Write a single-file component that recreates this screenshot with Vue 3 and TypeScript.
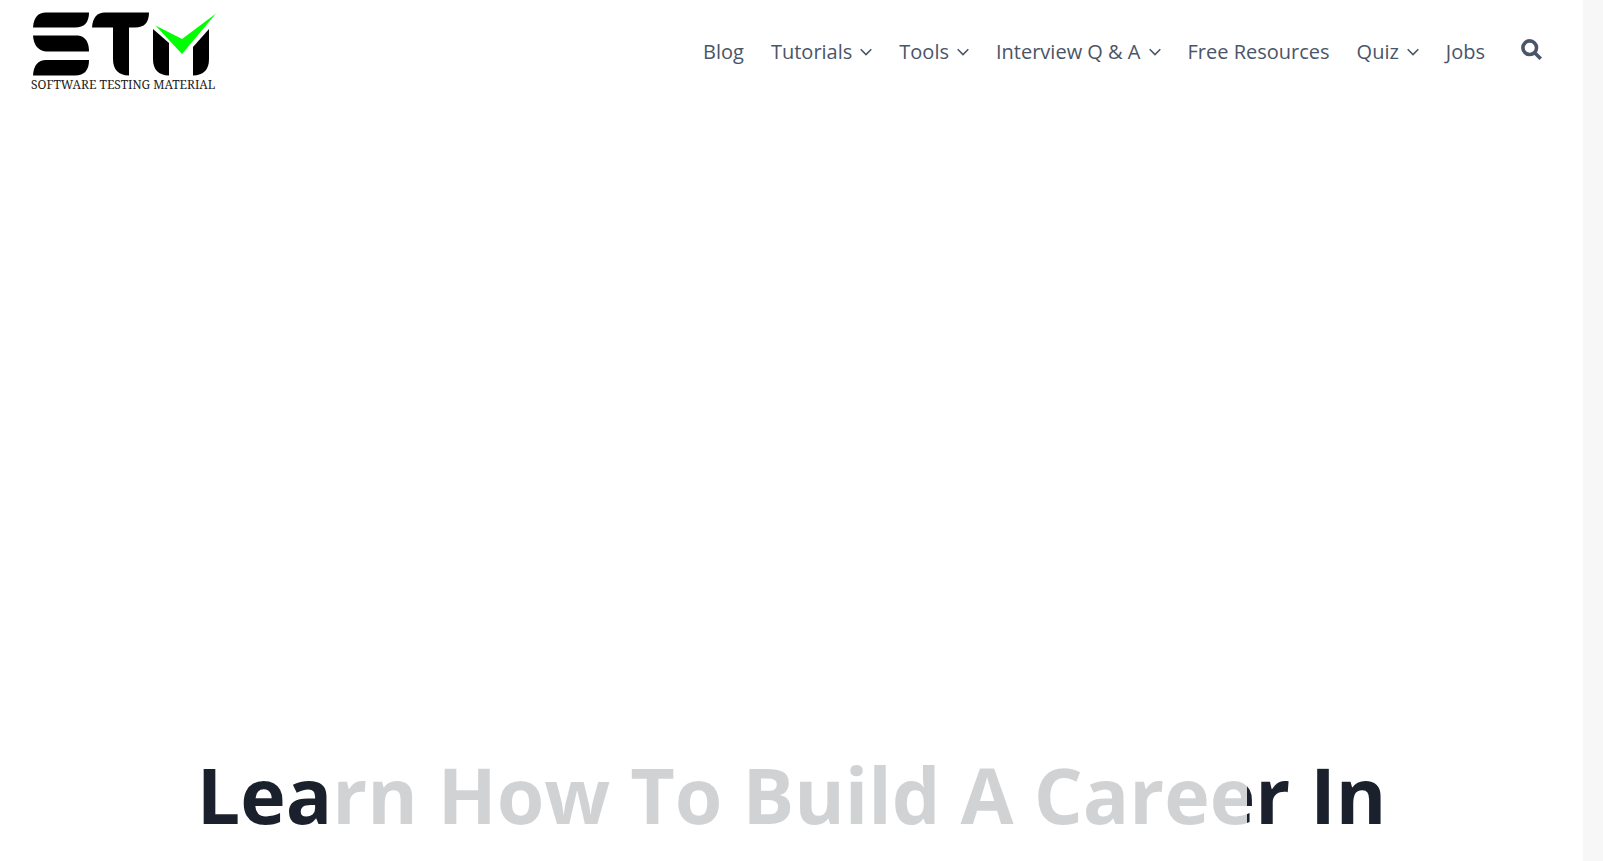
<script setup lang="ts">
interface NavItem {
  label: string
  menu: boolean
}

const items: NavItem[] = [
  { label: 'Blog', menu: false },
  { label: 'Tutorials', menu: true },
  { label: 'Tools', menu: true },
  { label: 'Interview Q & A', menu: true },
  { label: 'Free Resources', menu: false },
  { label: 'Quiz', menu: true },
  { label: 'Jobs', menu: false },
]
</script>

<template>
  <div class="page">
    <div class="content">
      <header class="header">
        <a class="logo" href="#" aria-label="Software Testing Material home">
          <svg class="mark" viewBox="0 0 186 64" aria-hidden="true">
            <path d="M2 15.500Q3 0.500 15 0.500H58Q58 15.500 44 15.500Z" />
            <path d="M2 23.500H47Q58 25 58 39.500H15Q3 38 2 23.500Z" />
            <path d="M2 63.500Q3 48 15 48H58Q58 63.500 44 63.500Z" />
            <path d="M61 15.500Q62 0.500 74 0.500H118Q118 15.500 104 15.500H98V63.500Q82 63 82 47V15.500Z" />
            <path d="M122 17L138 31V63.500Q122 63 122 47Z" />
            <path d="M178 17V47Q178 63 162 63.500V35Z" />
            <path class="tick" d="M124.500 13.500L151 27L185 1.500L151 42Z" />
          </svg>
          <span class="tagline">SOFTWARE TESTING MATERIAL</span>
        </a>
        <nav class="nav" aria-label="Primary">
          <a v-for="item in items" :key="item.label" class="link" href="#">
            {{ item.label }}
            <svg v-if="item.menu" class="chevron" viewBox="0 0 12 8" aria-hidden="true">
              <path d="M0.700 1.200L6 6.500L11.300 1.200" />
            </svg>
          </a>
          <button class="search" type="button" aria-label="Search">
            <svg viewBox="0 0 20 20" aria-hidden="true">
              <circle cx="8.300" cy="8.300" r="6.500" />
              <path d="M13 13L18.800 18.800" />
            </svg>
          </button>
        </nav>
      </header>
      <main class="hero">
        <h1 class="title">Learn How To Build A Career In</h1>
        <div class="veil"></div>
      </main>
    </div>
    <div class="gutter"></div>
  </div>
</template>

<style>
body {
  margin: 0;
}
</style>

<style scoped>
.page {
  display: flex;
  min-height: 100vh;
  background: #fff;
  font-family: "Open Sans", "Noto Sans", sans-serif;
}

.content {
  flex: 1;
  display: flex;
  flex-direction: column;
}

.gutter {
  width: 20px;
  background: #f7f7f7;
}

.header {
  display: flex;
  justify-content: space-between;
  align-items: flex-start;
  padding: 12px 41px 0 31px;
}

.logo {
  display: flex;
  flex-direction: column;
  width: 186px;
  color: #222;
  text-decoration: none;
}

.mark {
  height: 64px;
  fill: #000;
}

.tick {
  fill: #0f0;
}

.tagline {
  font: 12px/18px "Noto Serif", "Liberation Serif", serif;
  white-space: nowrap;
}

.nav {
  display: flex;
  align-items: center;
  gap: 27px;
  padding-top: 24px;
}

.link {
  display: flex;
  align-items: center;
  gap: 8px;
  color: #4a5568;
  font-size: 20px;
  line-height: 32px;
  text-decoration: none;
  white-space: nowrap;
}

.chevron {
  width: 12px;
  height: 8px;
}

.chevron path,
.search svg {
  fill: none;
  stroke: currentColor;
}

.chevron path {
  stroke-width: 1.600px;
}

.search {
  display: flex;
  margin: 0 0 6px 9px;
  padding: 0;
  border: 0;
  background: none;
  color: #4a5568;
}

.search svg {
  width: 21px;
  height: 21px;
  stroke-width: 3.400px;
}

.hero {
  position: relative;
  flex: 1;
  display: flex;
  align-items: flex-end;
  justify-content: center;
}

.title {
  margin: 0;
  padding-bottom: 6px;
  color: #1a202c;
  font-size: 77px;
  font-weight: 700;
  line-height: 120px;
  text-align: center;
  white-space: nowrap;
}

.veil {
  position: absolute;
  inset: 0;
  width: 910px;
  margin: 0 auto;
  background: rgba(255, 255, 255, 0.8);
}
</style>
